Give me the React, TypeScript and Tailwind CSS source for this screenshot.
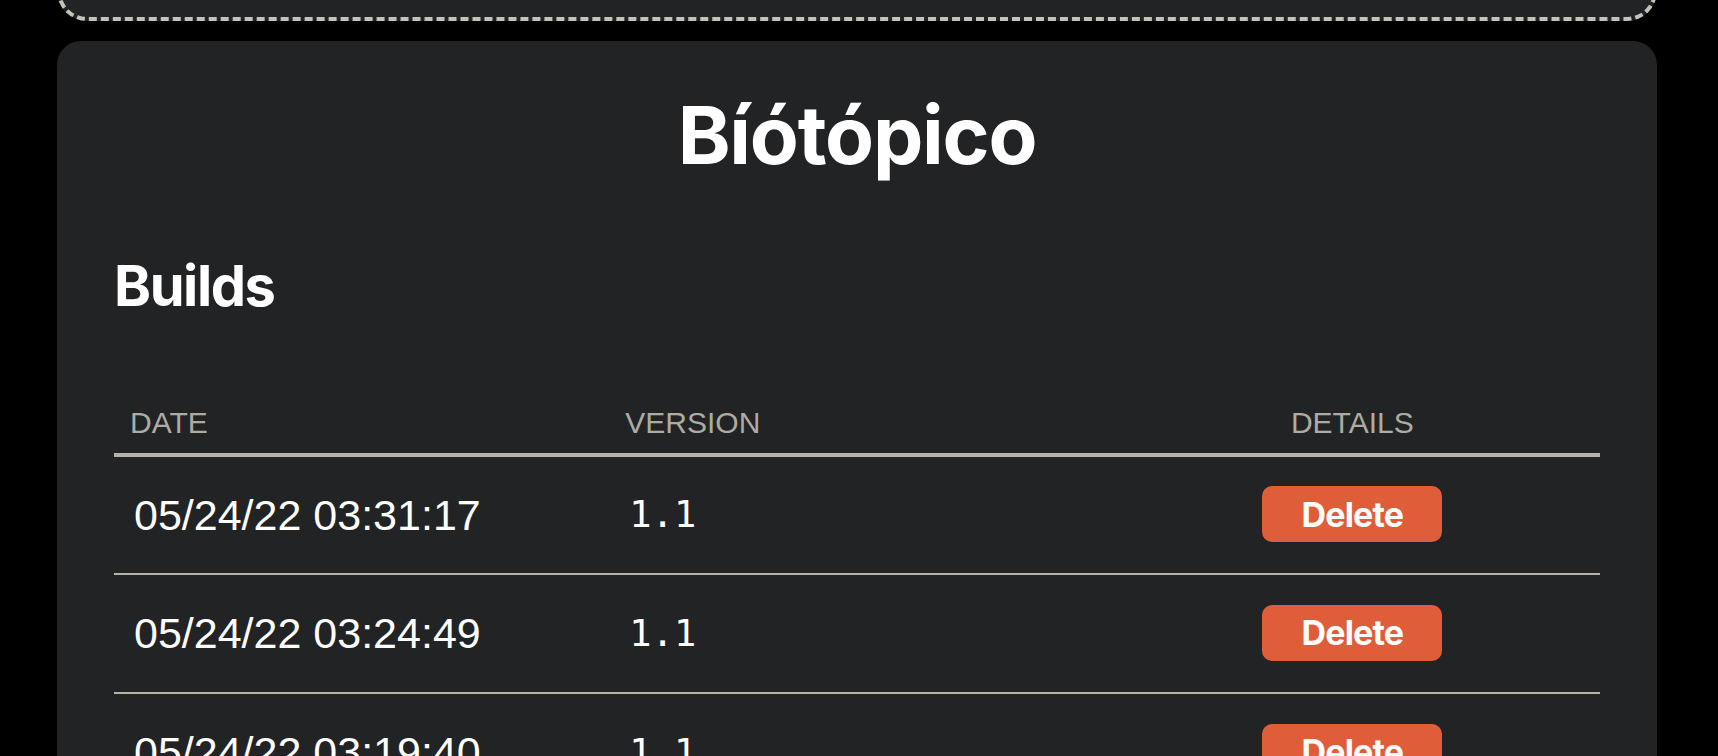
type BuildRow = {
  id: string;
  date: string;
  version: string;
};

const builds: BuildRow[] = [
  { id: "b1", date: "05/24/22 03:31:17", version: "1.1" },
  { id: "b2", date: "05/24/22 03:24:49", version: "1.1" },
  { id: "b3", date: "05/24/22 03:19:40", version: "1.1" },
  { id: "b4", date: "05/24/22 03:12:05", version: "1.0" }
];

export default function App() {
  return (
    <div className="h-[756px] overflow-hidden bg-black pl-[57px] pr-[61px]">
      {/* previous card, scrolled mostly out of view */}
      <div className="-mt-[40px] h-[61px] rounded-b-[30px] border-4 border-t-0 border-dashed border-[#c5c2ba] bg-[#222325]" />

      <section className="mt-[20px] rounded-3xl bg-[#222325] px-[57px] pt-[54px] pb-10">
        <h1 className="text-center font-['Inter',sans-serif] text-[80px] leading-none font-bold tracking-[-0.015em] text-white">
          Bíótópico
        </h1>

        <h2 className="mt-[83px] mb-[86px] font-['Inter',sans-serif] text-[56px] leading-none font-bold tracking-tight text-white">
          Builds
        </h2>

        <table className="w-full table-fixed border-collapse">
          <thead>
            <tr className="border-b-4 border-[#b5b2aa] font-['Liberation_Sans',Arial,sans-serif] text-[30px] leading-[45px] text-[#aeaba3]">
              <th className="pb-2 pl-4 text-left font-normal">DATE</th>
              <th className="pb-2 pl-4 text-left font-normal">VERSION</th>
              <th className="pb-2 text-center font-normal">DETAILS</th>
            </tr>
          </thead>
          <tbody>
            {builds.map((build) => (
              <tr key={build.id} className="border-b-2 border-[#b5b2aa]">
                <td className="h-[119px] pl-5 align-middle font-['Liberation_Sans',Arial,sans-serif] text-[43px] text-white">
                  {build.date}
                </td>
                <td className="h-[119px] pl-5 align-middle font-['DejaVu_Sans_Mono',monospace] text-[37px] text-white">
                  {build.version}
                </td>
                <td className="h-[119px] pb-[2px] text-center align-middle">
                  <button
                    type="button"
                    className="inline-flex h-[56px] w-[180px] items-center justify-center rounded-[10px] bg-[#e05d39] font-['Inter',sans-serif] text-[34px] font-bold tracking-tight text-white"
                  >
                    Delete
                  </button>
                </td>
              </tr>
            ))}
          </tbody>
        </table>
      </section>
    </div>
  );
}
